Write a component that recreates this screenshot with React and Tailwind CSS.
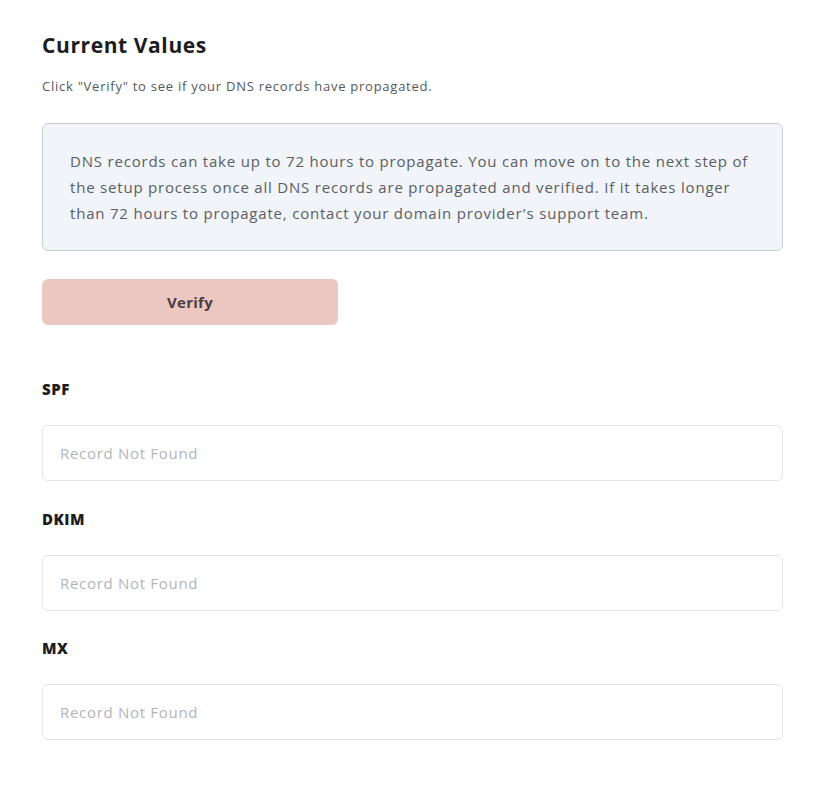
const records = ["SPF", "DKIM", "MX"];

export default function App() {
  return (
    <div className="min-h-screen bg-white font-['Open_Sans','Noto_Sans',sans-serif]">
      <div className="pl-[42px] pr-[45px] pt-[32px]">
        <h2 className="text-[21px] leading-[26px] font-bold tracking-[0.6px] text-[#1d1d1f]">Current Values</h2>
        <p className="mt-[20px] text-[13px] leading-4 tracking-[0.75px] text-[#55585c]">
          Click "Verify" to see if your DNS records have propagated.
        </p>

        <div className="mt-[29px] rounded-md border border-[#c9ced4] bg-[#f1f4f8] px-[27px] py-6">
          <p className="text-[15px] leading-[26px] tracking-[0.8px] text-[#5a5e64]">
            DNS records can take up to 72 hours to propagate. You can move on to the next step of
            <br />
            the setup process once all DNS records are propagated and verified. If it takes longer
            <br />
            than 72 hours to propagate, contact your domain provider's support team.
          </p>
        </div>

        <button className="mt-[28px] h-[46px] w-[296px] rounded-md bg-[#ecc6c1] text-[15px] font-bold tracking-[0.3px] text-[#4a3f40]">
          Verify
        </button>

        <div className="mt-[55px]">
          {records.map((name, i) => (
            <div key={name} className={i === 0 ? "" : i === 1 ? "mt-[29px]" : "mt-[28px]"}>
              <label className="block text-[15px] leading-[18px] font-extrabold tracking-[0.5px] text-[#1d1d1f]">{name}</label>
              <input
                readOnly
                placeholder="Record Not Found"
                className="mt-[27px] block h-[56px] w-full rounded-md border border-[#e2e4e8] bg-white px-[17px] text-[15px] tracking-[0.7px] text-[#333] placeholder:text-[#b3b5b8] outline-none"
              />
            </div>
          ))}
        </div>
      </div>
    </div>
  );
}
